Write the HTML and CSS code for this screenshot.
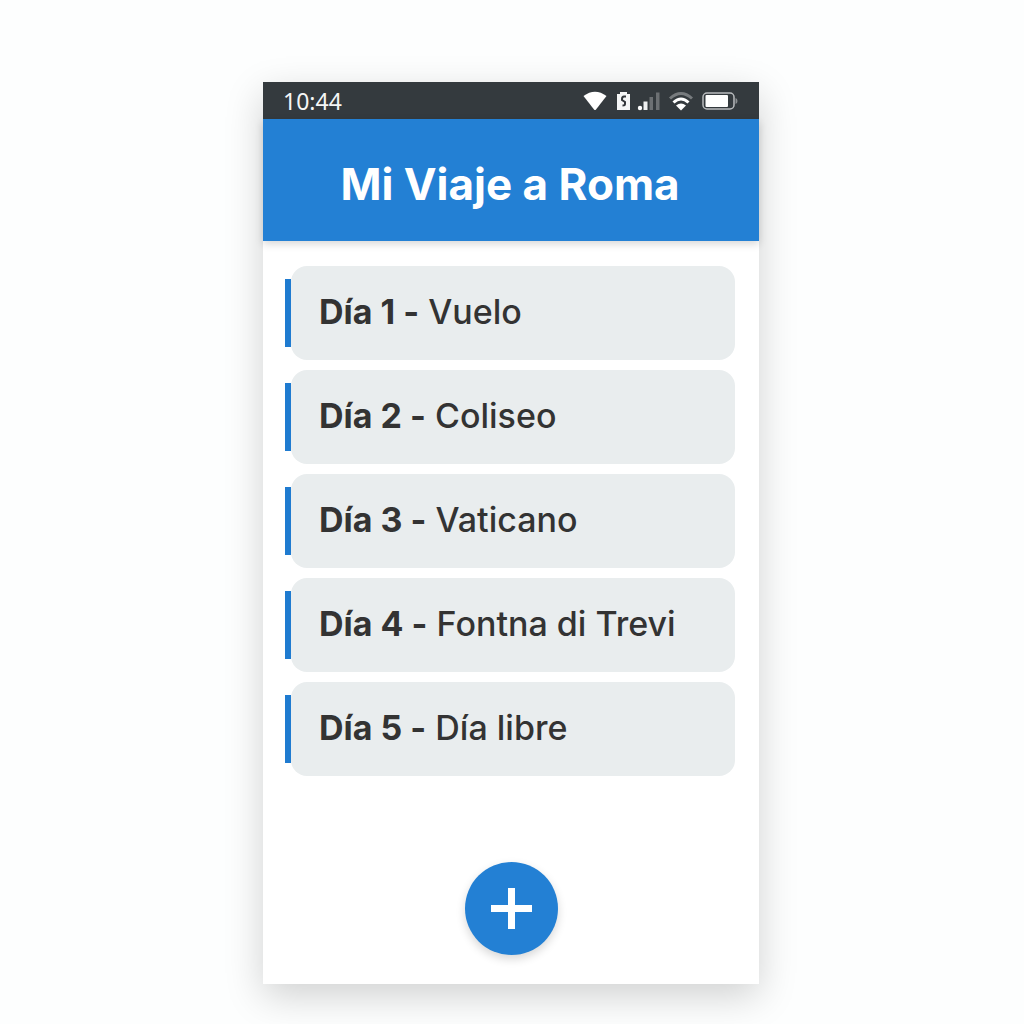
FILE: index.html
```html
<!DOCTYPE html>
<html lang="es">
<head>
  <meta charset="utf-8">
  <meta name="viewport" content="width=device-width, initial-scale=1">
  <title>Mi Viaje a Roma</title>
  <link rel="stylesheet" href="styles.css">
</head>
<body>
  <div class="phone">
    <div class="status-bar">
      <time class="clock">10:44</time>
      <svg class="status-icons" width="156" height="24" viewBox="0 0 156 24" aria-hidden="true">
        <!-- signal fan -->
        <path d="M.5 7Q12-1.500 23.500 7L13 20.500Q12 21.500 11 20.500Z" fill="#fff"/>
        <!-- battery saver -->
        <path d="M34 5h3V3h7v2h3V21H34Z" fill="#f4f6f6"/>
        <path d="M43 7.500h-2q-2 0-2 2.500v1l3 2v2q0 1.500-2.500 1.500" fill="none" stroke="#32373b" stroke-width="2"/>
        <!-- cell signal -->
        <circle cx="57" cy="19" r="2.200" fill="#fff"/>
        <path d="M60.500 12.500h4v8.500h-4Z" fill="#eef0f0"/>
        <path d="M66.500 8h3.500v13h-3.500ZM73 3.500h3.500v17.500H73Z" fill="#6c7073"/>
        <!-- wifi -->
        <g fill="none" stroke-width="3">
          <path d="M87 9.500Q98-.5 109 9.500" stroke="#777b7e"/>
          <path d="M90.500 13.500Q98 6.500 105.500 13.500" stroke="#fff"/>
        </g>
        <path d="M93 16.500Q98 12.500 103 16.500L98 21.500Z" fill="#fff"/>
        <!-- battery -->
        <rect x="120" y="4" width="31" height="16" rx="4" fill="none" stroke="#b9bcbe" stroke-width="1.500"/>
        <rect x="122.500" y="6" width="22.500" height="12" rx="1" fill="#fff"/>
        <path d="M152.500 9q2 .5 2 3t-2 3Z" fill="#8c9092"/>
      </svg>
    </div>

    <header class="app-header">
      <h1 class="title">Mi Viaje a Roma</h1>
    </header>

    <main class="content">
      <ul class="days">
        <li class="day"><div class="card"><strong>Día 1 -</strong> Vuelo</div></li>
        <li class="day"><div class="card"><strong>Día 2 -</strong> Coliseo</div></li>
        <li class="day"><div class="card"><strong>Día 3 -</strong> Vaticano</div></li>
        <li class="day"><div class="card"><strong>Día 4 -</strong> Fontna di Trevi</div></li>
        <li class="day"><div class="card"><strong>Día 5 -</strong> Día libre</div></li>
      </ul>
      <button class="add" type="button" aria-label="Añadir día">
        <svg width="41" height="41" viewBox="0 0 41 41" aria-hidden="true">
          <path d="M20.500 0V41M0 20.500H41" stroke="#fff" stroke-width="7"/>
        </svg>
      </button>
    </main>
  </div>
</body>
</html>
```
FILE: styles.css
```css
*, *::before {
  box-sizing: border-box;
}

body {
  margin: 0;
  padding: 82px 18px 40px 16px;
  background: #fdfefe;
  color: #333;
  font-family: Inter, "Liberation Sans", sans-serif;
}

.phone {
  max-width: 496px;
  margin: 0 auto;
  background: #fff;
  box-shadow: 0 12px 36px rgba(0, 0, 0, 0.18);
}

.status-bar {
  display: flex;
  align-items: center;
  justify-content: space-between;
  height: 37px;
  padding: 0 20px;
  background: #343a3e;
}

.clock {
  color: #f4f6f6;
  font: 23px/36px "Noto Sans", sans-serif;
}

.app-header {
  padding: 37px 18px 29px 16px;
  background: #2380d4;
  box-shadow: 0 3px 8px rgba(0, 0, 0, 0.16);
}

.title {
  margin: 0;
  color: #fff;
  font-size: 44px;
  font-weight: 700;
  line-height: 56px;
  text-align: center;
}

.content {
  display: flex;
  flex-direction: column;
  align-items: center;
  gap: 86px;
  padding: 25px 24px 29px;
}

.days {
  display: flex;
  flex-direction: column;
  align-self: stretch;
  gap: 10px;
  margin: 0 0 0 -2px;
  padding: 0;
  list-style: none;
}

.day {
  display: flex;
  align-items: center;
}

.day::before {
  content: "";
  width: 6px;
  height: 68px;
  background: #1f7bd0;
}

.card {
  flex: 1;
  padding: 24px 28px 26px;
  border-radius: 16px;
  background: #e9edee;
  font-size: 34px;
  font-weight: 500;
  line-height: 44px;
  font-feature-settings: "calt" 0;
}

.card strong {
  font-weight: 700;
}

.add {
  display: grid;
  place-items: center;
  width: 93px;
  height: 93px;
  padding: 0;
  border: 0;
  border-radius: 50%;
  background: #2380d4;
  box-shadow: 0 4px 10px rgba(0, 0, 0, 0.16);
  cursor: pointer;
}
```
